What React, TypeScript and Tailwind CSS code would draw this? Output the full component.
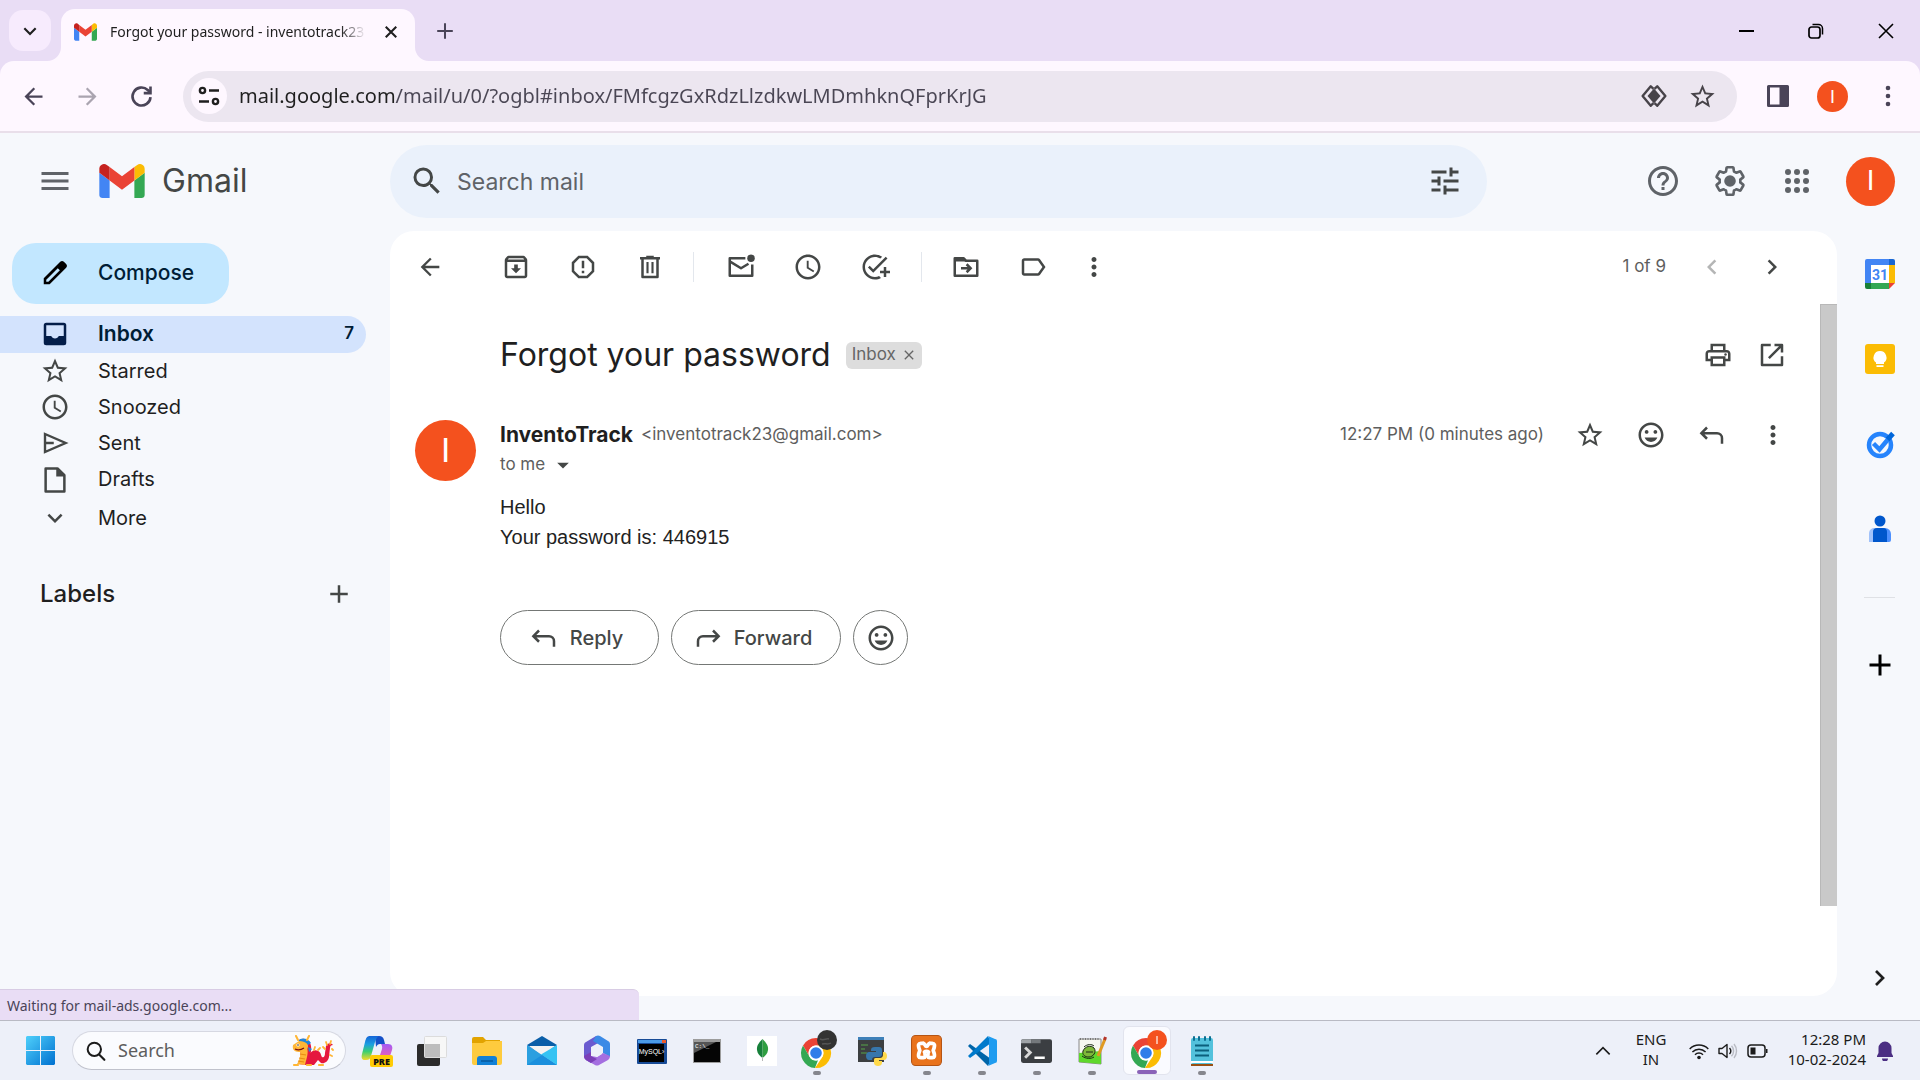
import type { ReactNode } from "react";
import {
  MdAccessTime,
  MdAdd,
  MdAddTask,
  MdArrowBack,
  MdArrowDropDown,
  MdArrowForward,
  MdChevronLeft,
  MdChevronRight,
  MdClose,
  MdHelpOutline,
  MdKeyboardArrowDown,
  MdLabelOutline,
  MdMenu,
  MdMood,
  MdMoreVert,
  MdOutlineArchive,
  MdOutlinePrint,
  MdReportGmailerrorred,
  MdSearch,
  MdStarBorder,
  MdTune,
} from "react-icons/md";

type IconProps = { className?: string; children?: ReactNode; box?: string };

function Svg({ className = "size-[30px]", box = "0 0 24 24", children }: IconProps) {
  return (
    <svg viewBox={box} className={className} fill="none" aria-hidden="true">
      {children}
    </svg>
  );
}

function GmailLogo({ className }: IconProps) {
  return (
    <Svg className={className} box="52 42 88 66">
      <path fill="#4285f4" d="M58 108h14V74L52 59v43c0 3.32 2.69 6 6 6" />
      <path fill="#34a853" d="M120 108h14c3.32 0 6-2.69 6-6V59l-20 15" />
      <path fill="#fbbc04" d="M120 48v26l20-15v-8c0-7.42-8.47-11.65-14.4-7.2" />
      <path fill="#ea4335" d="M72 74V48l24 18 24-18v26L96 92" />
      <path fill="#c5221f" d="M52 51v8l20 15V48l-5.600-4.200c-5.940-4.450-14.400-.22-14.400 7.200" />
    </Svg>
  );
}

function GearIcon() {
  return (
    <Svg className="size-9">
      <g transform="translate(12 12) scale(.92) translate(-12 -12)">
        <path
          stroke="currentColor"
          strokeWidth="1.900"
          strokeLinejoin="round"
          d="M19.43 12.98c.04-.32.07-.64.07-.98 0-.34-.03-.66-.07-.98l2.110-1.650c.19-.15.24-.42.12-.64l-2-3.460c-.09-.16-.26-.25-.44-.25-.06 0-.12.01-.17.03l-2.490 1c-.52-.4-1.080-.73-1.690-.98l-.38-2.650C14.460 2.180 14.250 2 14 2h-4c-.25 0-.46.18-.49.42l-.38 2.650c-.61.25-1.170.59-1.690.98l-2.490-1c-.06-.02-.12-.03-.18-.03-.17 0-.34.09-.43.25l-2 3.460c-.13.22-.07.49.12.64l2.110 1.650c-.04.32-.07.65-.07.98 0 .33.03.66.07.98l-2.110 1.650c-.19.15-.24.42-.12.64l2 3.460c.09.16.26.25.44.25.06 0 .12-.01.17-.03l2.490-1c.52.4 1.080.73 1.690.98l.38 2.650c.03.24.24.42.49.42h4c.25 0 .46-.18.49-.42l.38-2.650c.61-.25 1.170-.59 1.690-.98l2.490 1c.06.02.12.03.18.03.17 0 .34-.09.43-.25l2-3.460c.12-.22.07-.49-.12-.64l-2.110-1.650z"
        />
        <circle cx="12" cy="12" r="4.200" fill="currentColor" />
      </g>
    </Svg>
  );
}

function AppsIcon() {
  return (
    <Svg className="size-9">
      {[6, 12, 18].map((y) => [6, 12, 18].map((x) => <circle key={`${x}-${y}`} cx={x} cy={y} r="2" fill="currentColor" />))}
    </Svg>
  );
}

function TrashIcon() {
  return (
    <Svg>
      <path stroke="currentColor" strokeWidth="2" d="M4 5h16M9 4h6M6 6v14h12V6" strokeLinejoin="round" />
      <path stroke="currentColor" strokeWidth="1.700" d="M10 8v9M14 8v9" />
    </Svg>
  );
}

function UnreadIcon() {
  return (
    <Svg>
      <path
        stroke="currentColor"
        strokeWidth="2"
        strokeLinejoin="round"
        d="M15.500 5H3v14h18v-9M3 7.500l9 5.500 6-3.600"
      />
      <circle cx="20" cy="5" r="3" fill="currentColor" />
    </Svg>
  );
}

function MoveIcon() {
  return (
    <Svg>
      <path stroke="currentColor" strokeWidth="2" strokeLinejoin="round" d="M3 5v14h18V7h-9l-2-2z" />
      <path fill="currentColor" d="M3 4.500h7l2.500 3H3z" />
      <path stroke="currentColor" strokeWidth="2" d="M8 13h7M12.500 9.800l3.200 3.200-3.200 3.200" />
    </Svg>
  );
}

function OpenIcon() {
  return (
    <Svg>
      <path stroke="currentColor" strokeWidth="2" strokeLinejoin="round" d="M11 4H4v16h16v-7M14 4h6v6M20 4L9.500 14.500" />
    </Svg>
  );
}

function ReplyIcon() {
  return (
    <Svg>
      <path stroke="currentColor" strokeWidth="2" d="M8 6L3.500 10.500 8 15M3.500 10.500H16a4 4 0 0 1 4 4V19" />
    </Svg>
  );
}

function ForwardIcon() {
  return (
    <Svg>
      <path stroke="currentColor" strokeWidth="2" d="M16 6l4.500 4.500L16 15M20.500 10.500H8a4 4 0 0 0-4 4V19" />
    </Svg>
  );
}

function PencilIcon() {
  return (
    <Svg>
      <path
        fill="#000"
        fillRule="evenodd"
        d="M3 21v-4.800L16.200 3c.9-.8 2-.8 2.900 0l1.800 1.800c.9.9.9 2.100 0 3L7.700 21zm2-2h1.700l9.200-9.200-1.700-1.700L5 17.300z"
      />
    </Svg>
  );
}

function InboxIcon() {
  return (
    <Svg>
      <path
        fill="#041e49"
        fillRule="evenodd"
        d="M5 3h14a2 2 0 0 1 2 2v14a2 2 0 0 1-2 2H5a2 2 0 0 1-2-2V5a2 2 0 0 1 2-2m0 2v8.500h4c.5 1.300 1.600 2 3 2s2.500-.7 3-2h4V5z"
      />
    </Svg>
  );
}

function SendIcon() {
  return (
    <Svg>
      <path stroke="currentColor" strokeWidth="1.900" d="M4 4.800L20.500 12 4 19.200zM4 12h7" />
    </Svg>
  );
}

function DraftIcon() {
  return (
    <Svg>
      <path stroke="currentColor" strokeWidth="2" strokeLinejoin="round" d="M4.500 3.500h9.500l5.500 5.500v13h-15z" />
      <path fill="currentColor" d="M13 3l7 7h-7z" />
    </Svg>
  );
}

function SiteInfoIcon() {
  return (
    <Svg className="size-6">
      <g stroke="#1f1f1f" strokeWidth="2.400">
        <circle cx="5.500" cy="6.500" r="2.600" />
        <path d="M12 6.500h10M2 17.500h10" />
        <circle cx="18.500" cy="17.500" r="2.600" />
      </g>
    </Svg>
  );
}

function LensIcon() {
  return (
    <Svg className="size-[26px]">
      <path stroke="#474349" strokeWidth="2.200" strokeLinejoin="round" d="M11.500 5.500L9 3 1.500 12 9 21l2.500-2.500M12.500 5.500L15 3l7.500 9-7.500 9-2.500-2.500" />
      <path fill="#474349" d="M12 5l6 7-6 7-6-7z" />
    </Svg>
  );
}

function SidePanelIcon() {
  return (
    <Svg className="size-6">
      <path fill="#4a4458" fillRule="evenodd" d="M2.500 1h19A1.500 1.500 0 0 1 23 2.500v19a1.500 1.500 0 0 1-1.500 1.500h-19A1.500 1.500 0 0 1 1 21.500v-19A1.500 1.500 0 0 1 2.500 1M4 3.500v17h9.500v-17z" />
    </Svg>
  );
}

function Avatar({ className }: { className: string }) {
  return (
    <span className={`flex shrink-0 items-center justify-center rounded-full bg-[#f4511e] font-[Roboto,sans-serif] text-white ${className}`}>
      I
    </span>
  );
}

function IconButton({ label, className = "", children }: { label: string; className?: string; children: ReactNode }) {
  return (
    <button type="button" aria-label={label} className={`flex shrink-0 items-center justify-center ${className}`}>
      {children}
    </button>
  );
}

function TabStrip() {
  return (
    <header className="flex h-[61px] shrink-0 items-end bg-[#e9ddf5] text-[#1f1f1f]">
      <IconButton label="Search tabs" className="mb-[10px] ml-[9px] h-[41px] w-[42px] rounded-[14px] bg-[#f7ebfd]">
        <Svg className="size-4">
          <path stroke="#1f1f1f" strokeWidth="3.200" d="M3.500 8l8.500 8.500L20.500 8" />
        </Svg>
      </IconButton>
      <div className="relative ml-[10px] flex h-[52px] w-[354px] items-center rounded-t-[14px] bg-[#fef7ff] pr-[13px] pb-[7px] pl-[13px]">
        <svg viewBox="0 0 14 14" className="absolute bottom-0 -left-[14px] size-[14px]" aria-hidden="true">
          <path fill="#fef7ff" d="M14 0v14H0A14 14 0 0 0 14 0" />
        </svg>
        <svg viewBox="0 0 14 14" className="absolute -right-[14px] bottom-0 size-[14px]" aria-hidden="true">
          <path fill="#fef7ff" d="M0 0v14h14A14 14 0 0 1 0 0" />
        </svg>
        <GmailLogo className="h-[18px] w-[23px]" />
        <span className="ml-[13px] w-[256px] overflow-hidden mask-r-from-90% text-[14px] whitespace-nowrap">
          Forgot your password - inventotrack23
        </span>
        <IconButton label="Close tab" className="ml-auto size-[22px]">
          <Svg className="size-[18px]">
            <path stroke="#1f1f1f" strokeWidth="2.800" d="M5 5l14 14M19 5L5 19" />
          </Svg>
        </IconButton>
      </div>
      <IconButton label="New tab" className="mb-[19px] ml-[19px] size-[22px] text-[#4a4458]">
        <Svg className="size-[22px]">
          <path stroke="currentColor" strokeWidth="2.200" d="M12 3.500v17M3.500 12h17" />
        </Svg>
      </IconButton>
      <div className="ml-auto flex h-full">
        <IconButton label="Minimize" className="w-[69px]">
          <span className="h-[2px] w-[15px] bg-black" />
        </IconButton>
        <IconButton label="Restore" className="w-[70px]">
          <Svg className="size-4" box="0 0 16 16">
            <rect x="1" y="4" width="11" height="11" rx="2.500" stroke="#000" strokeWidth="1.700" />
            <path stroke="#000" strokeWidth="1.500" d="M4.500 1.500h6a4 4 0 0 1 4 4v6" />
          </Svg>
        </IconButton>
        <IconButton label="Close" className="w-[69px]">
          <Svg className="size-4" box="0 0 16 16">
            <path stroke="#000" strokeWidth="1.600" d="M1 1l14 14M15 1L1 15" />
          </Svg>
        </IconButton>
      </div>
    </header>
  );
}

function AddressBar() {
  return (
    <div className="shrink-0 bg-[#e9ddf5]">
      <div className="flex h-[72px] items-center rounded-t-[14px] border-b-2 border-[#e9dfea] bg-[#fef7ff] pr-[5px] pl-[6px] text-[#4a4458]">
        <IconButton label="Back" className="w-[54px]"><MdArrowBack className="size-[27px]" /></IconButton>
        <IconButton label="Forward" className="w-[54px] text-[#aaa4b0]"><MdArrowForward className="size-[27px]" /></IconButton>
        <IconButton label="Reload" className="w-[54px]">
          <Svg className="size-[27px]">
            <path stroke="currentColor" strokeWidth="2.300" d="M20 12.500A8 8 0 1 1 17.500 6.200L20 8.500" />
            <path stroke="currentColor" strokeWidth="2.300" d="M20 3v6h-6" />
          </Svg>
        </IconButton>
        <div className="ml-[15px] flex h-[51px] min-w-0 flex-1 items-center rounded-full bg-[#ece6f0] pr-[20px] pl-2">
          <IconButton label="View site information" className="size-9 rounded-full bg-[#fef7ff]"><SiteInfoIcon /></IconButton>
          <input
            aria-label="Address"
            className="ml-3 min-w-0 flex-1 bg-[linear-gradient(90deg,#1f1f1f_157px,#4a4654_157px)] bg-clip-text text-[20px] text-transparent outline-none"
            defaultValue="mail.google.com/mail/u/0/?ogbl#inbox/FMfcgzGxRdzLlzdkwLMDmhknQFprKrJG"
          />
          <IconButton label="Page tools" className="w-[49px]"><LensIcon /></IconButton>
          <IconButton label="Bookmark this tab" className="-mr-[10px] w-[49px] text-[#474349]"><MdStarBorder className="size-[29px]" /></IconButton>
        </div>
        <div className="ml-[13px] flex">
          <IconButton label="Side panel" className="w-[55px]"><SidePanelIcon /></IconButton>
          <IconButton label="Profile" className="w-[55px]"><Avatar className="size-[31px] text-[18px]" /></IconButton>
          <IconButton label="Chrome menu" className="w-[55px]">
            <Svg className="size-6">
              <g fill="currentColor"><circle cx="12" cy="4" r="2.300" /><circle cx="12" cy="12" r="2.300" /><circle cx="12" cy="20" r="2.300" /></g>
            </Svg>
          </IconButton>
        </div>
      </div>
    </div>
  );
}

function GmailHeader() {
  return (
    <div className="flex h-[98px] shrink-0 items-center pb-[2px] text-[#5f6368]">
      <div className="flex w-[390px] shrink-0 items-center pl-[37px]">
        <IconButton label="Main menu" className="size-9"><MdMenu className="size-9" /></IconButton>
        <a href="#inbox" className="ml-[26px] flex items-center gap-[17px] text-[32px] leading-none text-[#444746]">
          <GmailLogo className="h-[34px] w-[46px]" />
          Gmail
        </a>
      </div>
      <form role="search" className="flex h-[73px] w-[1097px] min-w-0 items-center rounded-full bg-[#eaf1fb] pr-[24px] pl-[19px] text-[#444746]">
        <IconButton label="Search" className="size-9"><MdSearch className="size-9" /></IconButton>
        <input
          aria-label="Search mail"
          placeholder="Search mail"
          className="ml-3 min-w-0 flex-1 pt-[2px] text-[23px] outline-none placeholder:text-[#5f6368]"
        />
        <IconButton label="Search options" className="size-9"><MdTune className="size-9" /></IconButton>
      </form>
      <div className="ml-auto flex items-center pr-[17px]">
        <IconButton label="Support" className="w-[67px]"><MdHelpOutline className="size-9" /></IconButton>
        <IconButton label="Settings" className="w-[67px]"><GearIcon /></IconButton>
        <IconButton label="Google apps" className="w-[67px]"><AppsIcon /></IconButton>
        <IconButton label="Google Account" className="ml-[8px] w-[65px]"><Avatar className="size-[49px] text-[28px]" /></IconButton>
      </div>
    </div>
  );
}

const folders = [
  { name: "Starred", icon: <MdStarBorder className="size-[30px]" /> },
  { name: "Snoozed", icon: <MdAccessTime className="size-[30px]" /> },
  { name: "Sent", icon: <SendIcon /> },
  { name: "Drafts", icon: <DraftIcon /> },
];

function Sidebar() {
  return (
    <nav className="flex w-[390px] shrink-0 flex-col pt-3 text-[20px] text-[#1f1f1f]" aria-label="Mail folders">
      <button type="button" className="ml-3 flex h-[61px] w-[217px] items-center gap-[28px] rounded-[24px] bg-[#c2e7ff] pb-px pl-7 text-[21px] font-medium text-[#001d35]">
        <PencilIcon />
        Compose
      </button>
      <a href="#inbox" className="mt-3 flex h-[37px] w-[366px] items-center gap-[28px] rounded-r-full bg-[#d3e3fd] pr-3 pb-px pl-10 text-[#001d35]">
        <InboxIcon />
        <span className="text-[21px] font-semibold">Inbox</span>
        <span className="ml-auto text-[17px] font-semibold">7</span>
      </a>
      {folders.map((f) => (
        <a key={f.name} href={`#${f.name.toLowerCase()}`} className="flex h-9 items-center gap-[28px] pl-10">
          <span className="text-[#444746]">{f.icon}</span>
          {f.name}
        </a>
      ))}
      <button type="button" className="mt-[3px] flex h-9 items-center gap-[28px] pl-10">
        <MdKeyboardArrowDown className="size-[30px] text-[#444746]" />
        More
      </button>
      <div className="mt-[39px] flex h-[38px] items-center justify-between pr-[36px] pl-10">
        <h2 className="text-[24px] font-medium">Labels</h2>
        <IconButton label="Create new label" className="size-[30px] text-[#444746]"><MdAdd className="size-[30px]" /></IconButton>
      </div>
    </nav>
  );
}

function MailToolbar() {
  const divider = <span className="mx-[10px] h-[30px] w-px bg-[#e3e7ed]" />;
  return (
    <div className="flex h-[73px] shrink-0 items-center pr-[35px] pb-[2px] pl-[6px] text-[#444746]">
      <IconButton label="Back to Inbox" className="mr-[19px] w-[67px]"><MdArrowBack className="size-7" /></IconButton>
      <IconButton label="Archive" className="w-[67px]"><MdOutlineArchive className="size-[30px]" /></IconButton>
      <IconButton label="Report spam" className="w-[67px]"><MdReportGmailerrorred className="size-[30px]" /></IconButton>
      <IconButton label="Delete" className="w-[67px]"><TrashIcon /></IconButton>
      {divider}
      <IconButton label="Mark as unread" className="w-[73px]"><UnreadIcon /></IconButton>
      <IconButton label="Snooze" className="w-[61px]"><MdAccessTime className="size-[30px]" /></IconButton>
      <IconButton label="Add to Tasks" className="w-[73px]"><MdAddTask className="size-[30px]" /></IconButton>
      {divider}
      <IconButton label="Move to" className="w-[67px]"><MoveIcon /></IconButton>
      <IconButton label="Labels" className="w-[67px]"><MdLabelOutline className="size-[30px]" /></IconButton>
      <IconButton label="More" className="w-[55px]"><MdMoreVert className="size-[30px]" /></IconButton>
      <span className="mr-[16px] ml-auto text-[17px] text-[#5e5e5e]">1 of 9</span>
      <IconButton label="Newer" className="w-[60px] text-[#b4b5b5]"><MdChevronLeft className="size-[30px]" /></IconButton>
      <IconButton label="Older" className="w-[60px]"><MdChevronRight className="size-[30px]" /></IconButton>
    </div>
  );
}

const pill = "flex h-[55px] items-center justify-center rounded-full border border-[#747775]";

function Message() {
  return (
    <article className="min-w-0 flex-1 text-[#1f1f1f]">
      <div className="flex h-[102px] items-center pr-[21px] pl-[110px]">
        <h1 className="text-[32px] leading-10">Forgot your password</h1>
        <span className="ml-[15px] flex h-[27px] items-center gap-1 rounded-[6px] bg-[#ddd] pr-1 pl-[6px] text-[17px] text-[#666]">
          Inbox
          <IconButton label="Remove label Inbox" className="size-[18px]"><MdClose className="size-4" /></IconButton>
        </span>
        <div className="ml-auto flex text-[#444746]">
          <IconButton label="Print all" className="w-[54px]"><MdOutlinePrint className="size-[30px]" /></IconButton>
          <IconButton label="In new window" className="w-[54px]"><OpenIcon /></IconButton>
        </div>
      </div>
      <div className="flex pt-[14px] pl-[25px]">
        <Avatar className="size-[61px] text-[34px]" />
        <div className="ml-6 min-w-0 flex-1">
          <div className="flex h-[30px] items-center pr-[17px]">
            <h2 className="text-[21px] font-bold">InventoTrack</h2>
            <span className="ml-[8px] text-[17px] text-[#5e5e5e]">&lt;inventotrack23@gmail.com&gt;</span>
            <time className="mr-[15px] ml-auto text-[17px] text-[#5e5e5e]">12:27 PM (0 minutes ago)</time>
            <div className="flex text-[#444746]">
              <IconButton label="Star" className="w-[61px]"><MdStarBorder className="size-[30px]" /></IconButton>
              <IconButton label="Add reaction" className="w-[61px]"><MdMood className="size-[30px]" /></IconButton>
              <IconButton label="Reply" className="w-[61px]"><ReplyIcon /></IconButton>
              <IconButton label="More message options" className="w-[61px]"><MdMoreVert className="size-[30px]" /></IconButton>
            </div>
          </div>
          <button type="button" className="flex h-[30px] items-center text-[17px] text-[#5e5e5e]">
            to me
            <MdArrowDropDown className="ml-1 size-7 text-[#444746]" />
          </button>
          <div className="mt-3 font-['Liberation_Sans',Arial,sans-serif] text-[20px] leading-[30px] text-[#222]">
            <p>Hello</p>
            <p>Your password is: 446915</p>
          </div>
          <div className="mt-[58px] flex gap-3 text-[20px] font-medium text-[#444746]">
            <button type="button" className={`${pill} w-[159px] gap-[11px] pr-[7px]`}><ReplyIcon />Reply</button>
            <button type="button" className={`${pill} w-[170px] gap-[11px] pr-[7px]`}><ForwardIcon />Forward</button>
            <button type="button" aria-label="Add reaction" className={`${pill} w-[55px]`}><MdMood className="size-[30px]" /></button>
          </div>
        </div>
      </div>
    </article>
  );
}

function SideRail() {
  return (
    <aside className="flex w-[83px] shrink-0 flex-col items-center pt-[12px] pl-[2px]" aria-label="Side panel">
      <IconButton label="Calendar" className="h-[61px]">
        <Svg box="0 0 30 30">
          <path fill="#4285f4" d="M2 0h23v6H6v18H0V2a2 2 0 0 1 2-2" />
          <path fill="#1967d2" d="M24 0h4a2 2 0 0 1 2 2v4h-6z" />
          <path fill="#fbbc04" d="M24 6h6v18h-6z" />
          <path fill="#34a853" d="M6 24h18v6H6z" />
          <path fill="#188038" d="M0 24h6v6H2a2 2 0 0 1-2-2z" />
          <path fill="#ea4335" d="M24 24h6l-6 6z" />
          <path fill="#fff" d="M6 6h18v18H6z" />
          <text x="15" y="20.500" textAnchor="middle" fontSize="14" fontWeight="700" fill="#4285f4" fontFamily="Roboto, sans-serif">31</text>
        </Svg>
      </IconButton>
      <IconButton label="Keep" className="mt-[24px] h-[61px]">
        <Svg box="0 0 30 30">
          <rect width="30" height="30" rx="3" fill="#fbbc04" />
          <path fill="#fff" d="M15 7a6.500 6.500 0 0 0-4 11.600V20h8v-1.400A6.500 6.500 0 0 0 15 7M11.500 21.300h7v1.800h-7z" />
        </Svg>
      </IconButton>
      <IconButton label="Tasks" className="mt-[24px] h-[61px]">
        <Svg box="0 0 30 30">
          <circle cx="15" cy="16" r="11" stroke="#2684fc" strokeWidth="4.500" />
          <path stroke="#2684fc" strokeWidth="4.500" d="M8.500 14.500l6 6L25 8" />
          <path stroke="#0066da" strokeWidth="5" d="M22.500 10.500l5.500-6" />
        </Svg>
      </IconButton>
      <IconButton label="Contacts" className="mt-[24px] h-[61px]">
        <Svg box="0 0 30 30">
          <circle cx="15" cy="7" r="5.500" fill="#0057cc" />
          <path fill="#a1c2fa" d="M8 14h6v14H4v-8a6 6 0 0 1 4-6" />
          <path fill="#4d90fe" d="M16 14h4a6 6 0 0 1 6 6v6a2 2 0 0 1-2 2h-8z" />
          <path fill="#0057cc" d="M12 14h6a4 4 0 0 1 4 4v10H8V18a4 4 0 0 1 4-4" />
        </Svg>
      </IconButton>
      <hr className="mt-[38px] w-[31px] border-[#dfe1e5]" />
      <IconButton label="Get add-ons" className="mt-[52px] size-[30px] text-black"><MdAdd className="size-9 shrink-0" /></IconButton>
      <IconButton label="Hide side panel" className="mt-auto mb-[27px] size-[30px] text-[#1f1f1f]">
        <Svg className="size-6"><path stroke="currentColor" strokeWidth="2.700" d="M8 5l7 7-7 7" /></Svg>
      </IconButton>
    </aside>
  );
}

function ChromeIcon({ children }: { children: ReactNode }) {
  return (
    <Svg className="size-9 overflow-visible" box="0 0 36 36">
      <circle cx="17" cy="20" r="15" fill="#fff" />
      <path fill="#ea4335" d="M4 12.500A15 15 0 0 1 30 12.500H17a7.500 7.500 0 0 0-6.500 11.200z" />
      <path fill="#34a853" d="M4 12.500l6.500 11.200A7.500 7.500 0 0 0 19 27.200L16 35A15 15 0 0 1 4 12.500" />
      <path fill="#fbbc04" d="M30 12.500A15 15 0 0 1 16 35l7.500-11.300A7.500 7.500 0 0 0 17 12.500z" />
      <circle cx="17" cy="20" r="7.400" fill="#fff" />
      <circle cx="17" cy="20" r="5.800" fill="#2f7de9" />
      {children}
    </Svg>
  );
}

const tasks: { name: string; running?: boolean; active?: boolean; icon: ReactNode }[] = [
  {
    name: "Copilot",
    icon: (
      <Svg className="size-8" box="0 0 32 32">
        <defs>
          <linearGradient id="copilotLeft" x1="0" y1="0" x2="0" y2="1">
            <stop stopColor="#1565d8" />
            <stop offset=".35" stopColor="#1b9fe0" />
            <stop offset=".65" stopColor="#3ccf71" />
            <stop offset="1" stopColor="#f3d92b" />
          </linearGradient>
          <linearGradient id="copilotRight" x1="0" y1="0" x2="0" y2="1">
            <stop stopColor="#a45cf5" />
            <stop offset=".6" stopColor="#e05fc0" />
            <stop offset="1" stopColor="#ff8a5c" />
          </linearGradient>
        </defs>
        <path fill="#1450c8" d="M14 1h4c3 0 4 1 5 4l1 4h-5c-2 0-3 1-4 3z" />
        <path fill="url(#copilotLeft)" d="M9 1h9c-2 1-3 3-4 6l-4 14c-1 3-2 4-5 4H4c-3 0-4-2-3-6L4 7c1-4 2-6 5-6" />
        <path fill="url(#copilotRight)" d="M20 9h7c4 0 5 3 4 6l-3 9c-1 3-2 4-5 4h-9c2 0 3-2 4-5l3-9c.500-2 0-4-1-5" />
        <rect x="9" y="20" width="23" height="12" rx="2" fill="#ffcb05" />
        <text x="20.500" y="29.500" textAnchor="middle" fontSize="9" fontWeight="800" fill="#111" fontFamily="Open Sans, sans-serif">PRE</text>
      </Svg>
    ),
  },
  {
    name: "Task View",
    icon: (
      <Svg className="size-8" box="0 0 32 32">
        <rect x="1" y="9" width="23" height="22" rx="2" fill="#2b2b2b" />
        <rect x="8.500" y="1.500" width="22" height="21" rx="1" fill="#f7f7f7" stroke="#dcdcdc" />
        <path fill="#bdbdbd" d="M9 9h15v13H9z" />
      </Svg>
    ),
  },
  {
    name: "File Explorer",
    icon: (
      <Svg className="size-8" box="0 0 32 32">
        <path fill="#e2a300" d="M3 2h9l3 3h14v6H1V4a2 2 0 0 1 2-2" />
        <path fill="#fecb3e" d="M1 8h11l3-2h16v22a2 2 0 0 1-2 2H3a2 2 0 0 1-2-2z" />
        <path fill="#1180d6" d="M9 21h14a3 3 0 0 1 3 3v6H6v-6a3 3 0 0 1 3-3" />
        <path stroke="#075a9e" strokeWidth="1.500" d="M10 26h12" />
      </Svg>
    ),
  },
  {
    name: "Mail",
    icon: (
      <Svg className="size-8" box="0 0 32 32">
        <path fill="#0a5ea8" d="M1 10L16 1l15 9-15 11z" />
        <path fill="#f3f3f3" d="M3 11h26L16 21z" />
        <path fill="#2a9fe0" d="M1 10l30 20H1z" />
        <path fill="#35c3f3" d="M31 10v20L15 19.500z" />
        <path fill="#1b8fdd" d="M1 30l15-10 15 10z" />
      </Svg>
    ),
  },
  {
    name: "Microsoft 365",
    icon: (
      <Svg className="size-8" box="0 0 32 32">
        <path fill="#6a5bd0" d="M15 1L5 7c-2 1-2 2-2 4v10c0 2 1 3 2 4l5 3V12l9-5z" />
        <path fill="#3b8ae6" d="M15 1c1-.700 3-.700 4 0l8 5c2 1 2 2 2 4v12l-7-4v-6l-10-6z" />
        <path fill="#a46ee0" d="M29 21c0 2-1 3-2 4l-9 5c-1 .700-3 .700-4 0l-9-5 5-4 6 1 6-4z" />
        <path fill="#7b3fb8" d="M3 21l7-4v4l6 3-6 4-5-3c-1-1-2-2-2-4" />
        <path fill="#edf0f9" d="M16 10l5 3v6l-5 3-5-3v-6z" />
      </Svg>
    ),
  },
  {
    name: "MySQL Command Line",
    icon: (
      <Svg className="size-[30px]" box="0 0 30 30">
        <rect x="0" y="3" width="30" height="25" rx="1" fill="#174a96" />
        <path fill="#4b9be8" d="M1 4h28v3H1z" />
        <path fill="#ee5a2a" d="M25 4h4v3h-4z" />
        <path fill="#000" d="M2 8h25v18H2z" />
        <text x="14.500" y="17.500" textAnchor="middle" fontSize="7" fill="#fff" fontFamily="Liberation Sans, sans-serif">MySQL›</text>
      </Svg>
    ),
  },
  {
    name: "Command Prompt",
    icon: (
      <Svg className="size-[30px]" box="0 0 30 30">
        <rect x="1" y="3" width="28" height="24" fill="#9c9c9c" />
        <path fill="#050505" d="M2 6h26v20H2z" />
        <path fill="#555" d="M2 6h22L2 17z" />
        <text x="3" y="12" fontSize="6" fill="#fff" fontFamily="Liberation Mono, monospace">C:\_</text>
      </Svg>
    ),
  },
  {
    name: "MongoDB Compass",
    icon: (
      <Svg box="0 0 30 30">
        <path fill="#fff" d="M0 0h30v30H0z" />
        <path fill="#2f9e41" d="M15.500 3c4 4 6 7 5.500 11-.500 4-3 6-5.500 8z" />
        <path fill="#17803a" d="M15.500 3c-4 4-6 7-5.500 11 .500 4 3 6 5.500 8z" />
        <path stroke="#b7b7b7" d="M15.500 21v4" />
      </Svg>
    ),
  },
  { name: "Chrome, work profile", running: true, icon: <ChromeIcon><circle cx="28" cy="7" r="10" fill="#333" /><path stroke="#555" strokeWidth="1.500" d="M21 6c4 2 6-1 9 0M23 11c3-1 6 1 9-1" /></ChromeIcon> },
  {
    name: "Python IDLE",
    icon: (
      <Svg className="size-[30px]" box="0 0 30 30">
        <path fill="#3c3f41" d="M1 2h26v24H1z" />
        <path fill="#3d7fb8" d="M1 1h26v3H1z" />
        <path stroke="#57a64a" d="M4 9h7M4 13h4M4 17h6" />
        <path fill="#3776ab" d="M18 11h4c2 0 3 1 3 3v4c0 2-1 3-3 3h-4c-2 0-3 1-3 3h-3c-2 0-3-2-3-4s1-4 3-4h7v-1h-5v-1c0-2 1-3 4-3" />
        <path fill="#ffd94a" d="M26 16h1c2 0 3 2 3 4s-1 4-3 4h-5v1h3v2c0 2-2 3-4 3s-4-1-4-3v-3c0-2 1-2 3-2h3c2 0 3-2 3-3z" />
      </Svg>
    ),
  },
  {
    name: "XAMPP Control Panel",
    running: true,
    icon: (
      <Svg className="size-[31px]" box="0 0 30 30">
        <rect x=".500" y=".500" width="29" height="29" rx="4" fill="#e9731d" stroke="#b55414" />
        <g stroke="#fff" strokeWidth="3.600" strokeLinecap="round" strokeLinejoin="round">
          <path d="M12 8H9.500C7 8 7 10 7.500 12L8.500 15l-1 3c-.500 2-.500 4 2 4H12c2 0 2-2 1.500-3.500" />
          <path d="M18 8h2.500c2.500 0 2.500 2 2 4l-1 3 1 3c.500 2 .500 4-2 4H18c-2 0-2-2-1.500-3.500" />
          <path d="M12 8c1.500 0 1.500 3 3 3s1.500-3 3-3M13 16.500c1-1 3-1 4 0" />
        </g>
      </Svg>
    ),
  },
  {
    name: "Visual Studio Code",
    running: true,
    icon: (
      <Svg box="0 0 30 30">
        <path fill="#0065a9" d="M1 10l2-2 21 15-3 7z" />
        <path fill="#007acc" d="M1 20l2 2L24 7l-3-7z" />
        <path fill="#1f9cf0" d="M21 0l7 3a2 2 0 0 1 2 2v20a2 2 0 0 1-2 2l-7 3c1-1 1-2 1-3V3c0-1 0-2-1-3" />
      </Svg>
    ),
  },
  {
    name: "Terminal",
    running: true,
    icon: (
      <Svg className="size-[31px]" box="0 0 30 30">
        <rect y="4" width="30" height="23" rx="2" fill="#3b3e42" />
        <path fill="#9fa3a7" d="M2 4h8v4H0V6c0-1 1-2 2-2" />
        <path fill="#74787c" d="M10 4h9v4h-9z" />
        <path stroke="#d8d8d8" strokeWidth="2.800" d="M4 12l5 5-5 5" />
        <path stroke="#fff" strokeWidth="2.400" d="M13 22h10" />
      </Svg>
    ),
  },
  {
    name: "Notepad++",
    running: true,
    icon: (
      <Svg box="0 0 30 30">
        <path fill="#f7f7f0" stroke="#888" d="M2 3h22v25L2 26z" />
        <path fill="#5fd82c" d="M2 17l22-2v13L2 26z" />
        <path stroke="#777" strokeDasharray="1 1.500" strokeWidth="2" d="M3 3h20" />
        <path fill="#7fb83a" stroke="#1c2b14" d="M6 15c2-5 8-6 11-3 3 4-1 9-5 9s-7-2-6-6" />
        <path stroke="#1c2b14" d="M7 11c3-3 8-3 10-1M9 16h7M5 20c4 3 9 3 12 1" />
        <path stroke="#e09a22" strokeWidth="3" d="M28 3l-7 17" />
        <path stroke="#b4342a" strokeWidth="3" d="M28.500 1l-1 3" />
      </Svg>
    ),
  },
  {
    name: "Chrome, personal profile",
    running: true,
    active: true,
    icon: (
      <ChromeIcon>
        <circle cx="28" cy="7" r="10" fill="#f4511e" />
        <path stroke="#fbb49c" strokeWidth="2" d="M28 3v8" />
      </ChromeIcon>
    ),
  },
  {
    name: "Notepad",
    running: true,
    icon: (
      <Svg box="0 0 30 30">
        <rect x="4" y="2" width="22" height="26" rx="2" fill="#53c1dc" />
        <path fill="#fff" d="M4 25h22v2H4z" />
        <path stroke="#9a4f12" strokeWidth="2" d="M4 29h22" />
        <path stroke="#0b5f7c" strokeWidth="2" d="M8 9.500h14M8 14.500h14M8 19.500h14" />
        <path stroke="#0b6f92" strokeWidth="2" strokeLinecap="round" d="M7 1v3M12 1v3M18 1v3M23 1v3" />
      </Svg>
    ),
  },
];

function Dragon() {
  return (
    <Svg className="h-8 w-[42px]" box="0 0 42 32">
      <path fill="#e5173f" d="M17 20c2-4 6-6 9-4 3 1 3 5 4 6 2 1 3-1 3-4l1-7c1-3 5-4 7-1-2 0-3 1-3 3l-1 9c-1 5-5 7-8 6l-3-3-4 5h-9z" />
      <path stroke="#ffb636" strokeWidth="1.800" strokeLinecap="round" d="M22 15l1-3M26 15l2-2M33 14l-2-2M35 10l-1-3M38 9l1-3M40 14l1 1M38 20l2 1" />
      <path fill="#e5173f" d="M7 5c5-3 11 0 12 6s-2 14-4 19l-9-1c3-5 3-9 2-14z" />
      <path fill="#ffb636" d="M8 15l7-2c2 5-1 12-2 17l-8-1c3-5 4-9 3-14" />
      <path stroke="#e98b12" strokeWidth="1.200" d="M8 19l6 1M7 23l6 1M6 26l6 1" />
      <path fill="#ffb636" d="M1 10l6-4c5-1 9 1 9 5 0 5-5 6-9 6-5 0-7-3-6-7" />
      <path fill="#2386d8" d="M6 6c3-4 10-3 13 2l-3 2c-2-3-5-4-10-4M16 12l4 2-3 3z" />
      <path stroke="#ffb636" strokeWidth="2" strokeLinecap="round" d="M6 5L4 1M15 5l2-4" />
      <circle cx="6" cy="10" r="1.600" fill="#fff" />
      <circle cx="6" cy="10" r=".800" fill="#222" />
      <path stroke="#7a1010" strokeWidth="1.200" d="M3 14c2 1 6 1 9-1" />
      <path stroke="#ffb636" strokeWidth="2.200" strokeLinecap="round" d="M2 30h4M15 30h4M27 30h4" />
    </Svg>
  );
}

function Taskbar() {
  return (
    <footer className="flex h-[60px] shrink-0 items-center border-t border-[#b9bac4] bg-[#edf0f9] pl-[26px] text-[15px] text-[#1b1b1b]">
      <IconButton label="Start">
        <Svg className="size-[29px]" box="0 0 29 29">
          <defs>
            <linearGradient id="win" x1="0" y1="0" x2="29" y2="29" gradientUnits="userSpaceOnUse">
              <stop stopColor="#4fd0fb" />
              <stop offset="1" stopColor="#0070d0" />
            </linearGradient>
          </defs>
          <path fill="url(#win)" d="M1 0h13v14H0V1zM15 0h13l1 1v13H15zM0 15h14v14H1l-1-1zM15 15h14v13l-1 1H15z" />
        </Svg>
      </IconButton>
      <label className="ml-[17px] flex h-[39px] w-[274px] shrink-0 items-center rounded-full border border-[#d6d8e2] border-b-[#c0c2cc] bg-[#fafbfe] pr-[11px] pl-[13px]">
        <Svg className="size-[20px]">
          <circle cx="10" cy="10" r="8" stroke="#1b1b1b" strokeWidth="2.400" />
          <path stroke="#1b1b1b" strokeWidth="2.600" strokeLinecap="round" d="M16 16.500l6 6" />
        </Svg>
        <input aria-label="Search" placeholder="Search" className="ml-3 min-w-0 flex-1 text-[18px] outline-none placeholder:text-[#5d5d5d]" />
        <Dragon />
      </label>
      <div className="ml-[3px] flex">
        {tasks.map((t) => (
          <div key={t.name} className="flex w-[55px] justify-center">
            <button
              type="button"
              aria-label={t.name}
              className={`relative flex h-[49px] w-[48px] items-center justify-center rounded-[6px] ${t.active ? "border border-[#e2e4ee] bg-[#fafbff]" : ""}`}
            >
              {t.icon}
              {t.running && (
                <span className={`absolute bottom-0 h-1 rounded-full ${t.active ? "w-5 bg-[#8a63b8]" : "w-2 bg-[#85868d]"}`} />
              )}
            </button>
          </div>
        ))}
      </div>
      <div className="ml-auto flex items-center pr-[27px]">
        <IconButton label="Show hidden icons" className="mr-[22px]">
          <Svg className="size-4"><path stroke="#1b1b1b" strokeWidth="2.400" d="M2 17L12 7l10 10" /></Svg>
        </IconButton>
        <div className="w-[36px] pb-[3px] text-center leading-5">ENG<br />IN</div>
        <div className="ml-[20px] flex items-center gap-[9px]">
          <Svg className="size-5" box="0 0 20 20">
            <g stroke="#1b1b1b" strokeWidth="1.500">
              <path d="M.700 8a13 13 0 0 1 18.600 0M3.400 11a9.300 9.300 0 0 1 13.200 0M6 13.800a5.600 5.600 0 0 1 8 0" />
            </g>
            <circle cx="10" cy="16.500" r="1.800" fill="#1b1b1b" />
          </Svg>
          <Svg className="size-5" box="0 0 20 20">
            <path stroke="#1b1b1b" strokeWidth="1.400" strokeLinejoin="round" d="M1 7.500h3L9 3.500v13L4 12.500H1z" />
            <path stroke="#1b1b1b" strokeWidth="1.400" d="M11.500 7a4.500 4.500 0 0 1 0 6" />
            <path stroke="#b9bbc4" strokeWidth="1.400" d="M13.500 4.800a7.500 7.500 0 0 1 0 10.400M16 3a11 11 0 0 1 0 14" />
          </Svg>
          <Svg className="h-5 w-[21px]" box="0 0 21 20">
            <rect x="1" y="4" width="17" height="12" rx="3" stroke="#1b1b1b" strokeWidth="1.500" />
            <rect x="3.500" y="6.500" width="5" height="7" fill="#1b1b1b" />
            <path fill="#1b1b1b" d="M19 8h1.500v4H19z" />
          </Svg>
        </div>
        <time className="ml-[18px] w-[80px] pb-[3px] text-right leading-5">12:28 PM<br />10-02-2024</time>
        <IconButton label="Notifications" className="ml-[11px]">
          <Svg className="h-5 w-4" box="0 0 16 20">
            <path fill="#4b2e83" d="M8 .500a6.500 6.500 0 0 1 6.500 6.500v5l1.500 3v1H0v-1l1.500-3V7A6.500 6.500 0 0 1 8 .500M5 17.500h6a3 3 0 0 1-6 0" />
          </Svg>
        </IconButton>
      </div>
    </footer>
  );
}

export default function App() {
  return (
    <div className="flex h-screen flex-col overflow-hidden bg-[#f6f8fc] font-['Noto_Sans',sans-serif]">
      <TabStrip />
      <AddressBar />
      <div className="relative flex min-h-0 flex-1 flex-col font-[Inter,sans-serif]">
        <GmailHeader />
        <div className="flex min-h-0 flex-1">
          <Sidebar />
          <main className="mb-6 flex min-w-0 flex-1 flex-col overflow-hidden rounded-[24px] bg-white">
            <MailToolbar />
            <div className="flex min-h-0 flex-1">
              <Message />
              <div className="w-[17px] shrink-0">
                <div className="h-[87%] border-t border-l border-[#b8b8b8] bg-[#c9c9c9]" />
              </div>
            </div>
          </main>
          <SideRail />
        </div>
        <div className="absolute bottom-0 left-0 flex h-[31px] w-[639px] items-center rounded-tr-[6px] border-t border-[#d8cce4] bg-[#e9ddf5] pt-px pl-[7px] font-['Noto_Sans',sans-serif] text-[14px] text-[#4a4458]">
          Waiting for mail-ads.google.com...
        </div>
      </div>
      <Taskbar />
    </div>
  );
}
